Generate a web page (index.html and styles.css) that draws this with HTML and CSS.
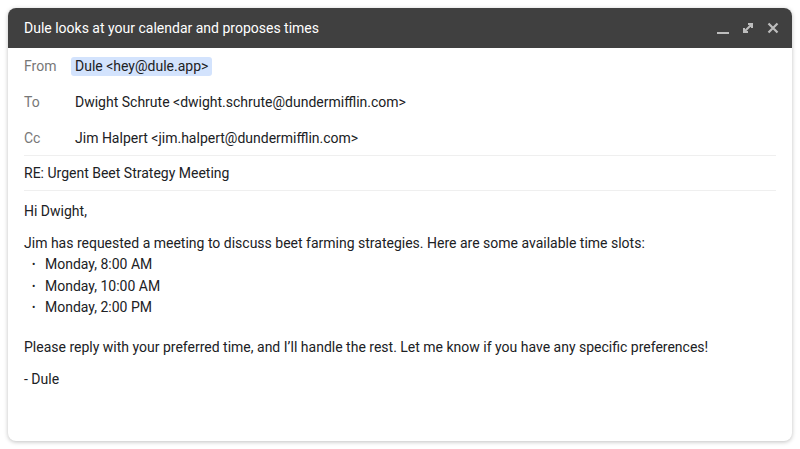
FILE: index.html
```html
<!DOCTYPE html>
<html>
<head>
<meta charset="utf-8">
<link rel="stylesheet" href="styles.css">
</head>
<body>
<div class="window">
  <div class="titlebar">
    <span class="title">Dule looks at your calendar and proposes times</span>
    <div class="controls">
      <svg class="ic" width="14" height="14" viewBox="0 0 14 14"><rect x="1" y="11" width="12" height="2" fill="#bdbdbd"/></svg>
      <svg class="ic" width="14" height="14" viewBox="0 0 14 14"><path d="M3 11 L11 3 M7 3 H11 V7 M3 7 V11 H7" stroke="#bdbdbd" stroke-width="2" fill="none"/></svg>
      <svg class="ic" width="14" height="14" viewBox="0 0 14 14"><path d="M2.5 2.5 L11.5 11.5 M11.5 2.5 L2.5 11.5" stroke="#bdbdbd" stroke-width="2.2" fill="none"/></svg>
    </div>
  </div>
  <div class="content">
    <div class="row"><span class="label">From</span><span class="chip">Dule &lt;hey@dule.app&gt;</span></div>
    <div class="row"><span class="label">To</span><span class="value">Dwight Schrute &lt;dwight.schrute@dundermifflin.com&gt;</span></div>
    <div class="row"><span class="label">Cc</span><span class="value">Jim Halpert &lt;jim.halpert@dundermifflin.com&gt;</span></div>
    <div class="subject">RE: Urgent Beet Strategy Meeting</div>
    <div class="body">
      <p>Hi Dwight,</p>
      <p class="intro">Jim has requested a meeting to discuss beet farming strategies. Here are some available time slots:</p>
      <ul class="slots">
        <li>Monday, 8:00 AM</li>
        <li>Monday, 10:00 AM</li>
        <li>Monday, 2:00 PM</li>
      </ul>
      <p>Please reply with your preferred time, and I’ll handle the rest. Let me know if you have any specific preferences!</p>
      <p>- Dule</p>
    </div>
  </div>
</div>
</body>
</html>
```
FILE: styles.css
```css
* { box-sizing: border-box; }
html, body { margin: 0; padding: 0; background: #fff; }
body {
  font-family: Roboto, "Liberation Sans", sans-serif;
  font-size: 14px;
  color: #202124;
  padding: 8px;
}
.window {
  height: 433px;
  border-radius: 8px;
  background: #fff;
  box-shadow: 0 1px 4px rgba(0,0,0,0.25);
  overflow: hidden;
  display: flex;
  flex-direction: column;
}
.titlebar {
  height: 40px;
  background: #404040;
  color: #fff;
  display: flex;
  align-items: center;
  padding: 0 12px 0 16px;
  flex-shrink: 0;
}
.title { flex: 1; font-size: 14px; }
.controls { display: flex; gap: 11px; align-items: center; }
.ic { display: block; }
.content { padding: 0 16px; }
.row {
  height: 36px;
  display: flex;
  align-items: center;
}
.label { width: 51px; color: #777; }
.chip {
  background: #d3e3fd;
  border-radius: 3px;
  padding: 2px 4px;
  margin-left: -4px;
  line-height: 15px;
}
.subject {
  margin-top: -1px;
  border-top: 1px solid #efefef;
  border-bottom: 1px solid #efefef;
  height: 36px;
  display: flex;
  align-items: center;
}
.body { padding-top: 10px; line-height: 21px; }
.body p { margin: 0 0 11px; }
.body p.intro { margin: 0; }
.slots { list-style: none; margin: 0 0 18px; padding: 0; line-height: 21.5px; }
.slots li { padding-left: 21px; position: relative; }
.slots li::before {
  content: "•";
  position: absolute;
  left: 8px;
  font-size: 10px;
}
```
